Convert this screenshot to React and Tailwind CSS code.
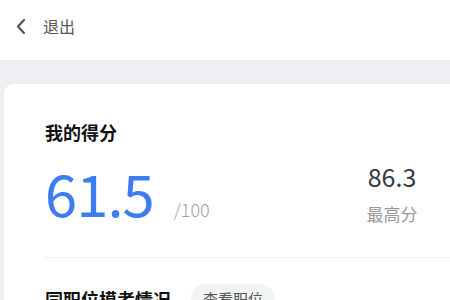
import React from "react";

const App = () => {
  return (
    <div
      className="w-[450px] h-[300px] overflow-hidden bg-[#eeeff3]"
      style={{ fontFamily: '"Noto Sans CJK SC", "Noto Sans", sans-serif' }}
    >
      {/* header */}
      <div className="h-[60px] bg-white flex items-center pl-[14px] pb-[8px]">
        <svg width="14" height="18" viewBox="0 0 14 18" fill="none">
          <path d="M10 3L4 9.5L10 16" stroke="#555" strokeWidth="2.2" strokeLinecap="round" strokeLinejoin="round" />
        </svg>
        <span className="ml-[15px] text-[16px] text-[#555]">退出</span>
      </div>

      <div className="h-[24px]" />

      {/* score card */}
      <div className="ml-1 w-[466px] bg-white rounded-tl-[10px] pl-[41px] pr-[48px] pt-[35px]">
        <h2 className="text-[18px] font-bold text-[#111] leading-[26px]">我的得分</h2>

        <div className="flex items-start justify-between mt-[12px]">
          <div className="flex items-baseline">
            <span className="text-[58px] leading-[70px] text-[#3d7cf2] tracking-[-1px]">61.5</span>
            <span className="ml-[20px] text-[18px] font-light text-[#a0a0a0]">/100</span>
          </div>
          <div className="w-[60px] flex flex-col items-center mt-[2px]">
            <span className="text-[25px] leading-[34px] text-[#333a45]">86.3</span>
            <span className="mt-[8px] text-[17px] text-[#9a9a9a]">最高分</span>
          </div>
        </div>

        <div className="mt-[30px] mr-[-48px] h-px bg-[#f0f0f2]" />

        <div className="flex items-center mt-[26px]">
          <h3 className="text-[18px] font-bold text-[#111] leading-[26px]">同职位模考情况</h3>
          <span className="ml-[20px] px-[12px] py-[4px] rounded-full bg-[#f2f3f5] text-[15px] text-[#555]">
            查看职位
          </span>
        </div>
      </div>
    </div>
  );
};

export default App;
